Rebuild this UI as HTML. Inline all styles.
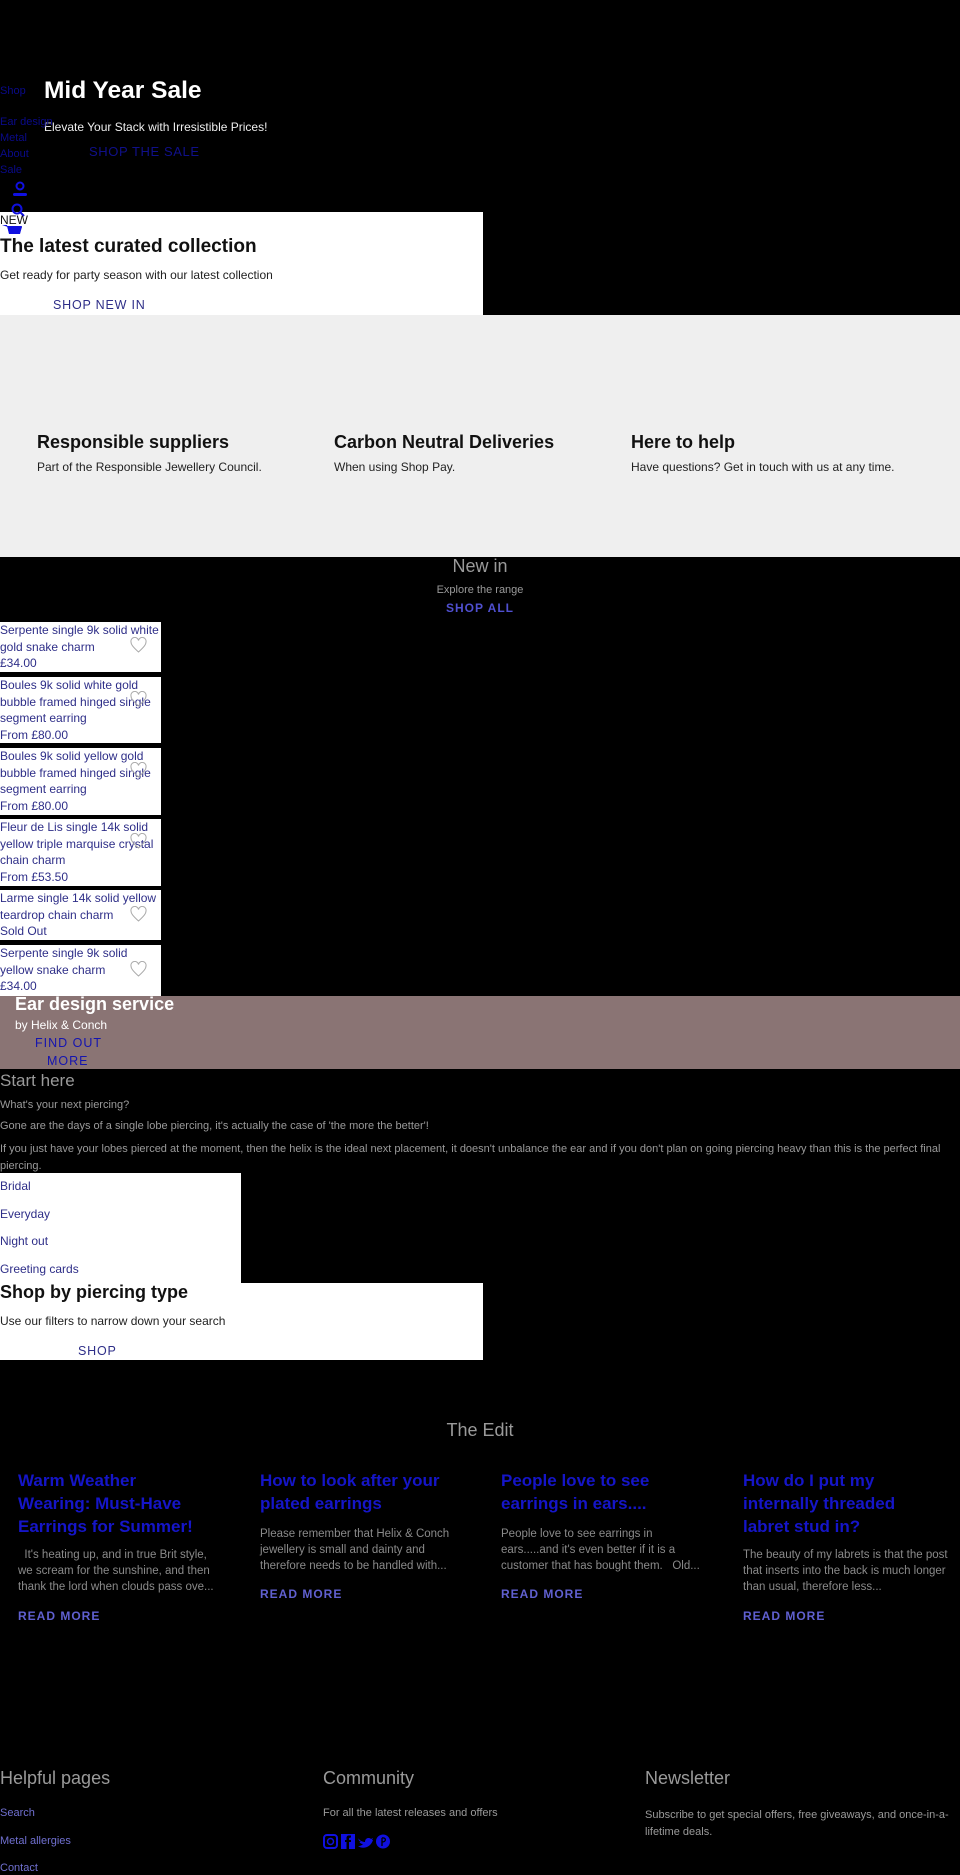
<!DOCTYPE html>
<html><head><meta charset="utf-8"><style>
*{margin:0;padding:0;box-sizing:border-box}
body{width:960px;height:1875px;background:#000;font-family:"Liberation Sans",sans-serif;position:relative;overflow:hidden}
.a{position:absolute;white-space:nowrap}
.nav{color:#0a0a8a;font-size:11px}
.card{position:absolute;left:0;width:161px;background:#fff;color:#2e2e88;font-size:12px;line-height:16.5px}
.card svg{position:absolute;right:14px}
.g{color:#9a9a9a}
.bt{color:#1515c8;font-size:17px;line-height:23px;font-weight:bold;white-space:normal;width:195px}
.bp{color:#8a8a8a;font-size:11.5px;line-height:16px;white-space:normal;width:205px}
.rm{color:#6060d0;font-size:12px;letter-spacing:1px;font-weight:bold}
</style></head><body>
<div class="a" style="left:44px;top:77px;color:#fff;font-size:24.5px;font-weight:bold">Mid Year Sale</div>
<div class="a" style="left:44px;top:120px;color:#eee;font-size:12px">Elevate Your Stack with Irresistible Prices!</div>
<div class="a" style="left:89px;top:144px;color:#10108a;font-size:13px;letter-spacing:.6px">SHOP THE SALE</div>
<div class="a nav" style="left:0;top:85px">Shop</div>
<div class="a nav" style="left:0;top:116px">Ear design</div>
<div class="a nav" style="left:0;top:132px">Metal</div>
<div class="a nav" style="left:0;top:148px">About</div>
<div class="a nav" style="left:0;top:164px">Sale</div>
<svg class="a" style="left:12px;top:181px" width="16" height="16"><circle cx="8" cy="5" r="3.5" fill="none" stroke="#1010e0" stroke-width="2"/><rect x="1" y="12" width="14" height="3" rx="1.5" fill="#1010e0"/></svg>
<div class="a" style="left:0;top:212px;width:483px;height:103px;background:#fff"></div>
<svg class="a" style="left:10px;top:202px" width="16" height="16"><circle cx="7" cy="7" r="4.5" fill="none" stroke="#1010e0" stroke-width="2"/><line x1="10" y1="10" x2="14" y2="14" stroke="#1010e0" stroke-width="2"/></svg>
<div class="a" style="left:0;top:213px;color:#111;font-size:12px">NEW</div>
<svg class="a" style="left:2px;top:224px" width="20" height="12"><path d="M0 1H5L7 9H18L20 3H6" fill="#1010e0"/><path d="M5 2H20L18 10H7Z" fill="#1010e0"/></svg>
<div class="a" style="left:0;top:236px;color:#111;font-size:19px;font-weight:bold">The latest curated collection</div>
<div class="a" style="left:0;top:268px;color:#222;font-size:12px">Get ready for party season with our latest collection</div>
<div class="a" style="left:53px;top:298px;color:#2e2e88;font-size:12.5px;letter-spacing:.8px">SHOP NEW IN</div>
<div class="a" style="left:0;top:315px;width:960px;height:242px;background:#efefef"></div>
<div class="a" style="left:37px;top:432px;color:#111;font-size:18px;font-weight:bold">Responsible suppliers</div>
<div class="a" style="left:37px;top:460px;color:#222;font-size:12px">Part of the Responsible Jewellery Council.</div>
<div class="a" style="left:334px;top:432px;color:#111;font-size:18px;font-weight:bold">Carbon Neutral Deliveries</div>
<div class="a" style="left:334px;top:460px;color:#222;font-size:12px">When using Shop Pay.</div>
<div class="a" style="left:631px;top:432px;color:#111;font-size:18px;font-weight:bold">Here to help</div>
<div class="a" style="left:631px;top:460px;color:#222;font-size:12px">Have questions? Get in touch with us at any time.</div>
<div class="a g" style="left:0;width:960px;text-align:center;top:556px;font-size:18px">New in</div>
<div class="a g" style="left:0;width:960px;text-align:center;top:584px;font-size:11px">Explore the range</div>
<div class="a" style="left:0;width:960px;text-align:center;top:601px;font-size:12px;color:#5050d0;font-weight:bold;letter-spacing:1px">SHOP ALL</div>
<div class="card" style="top:622px;height:50px">Serpente single 9k solid white gold snake charm<br>£34.00<svg style="top:15px" width="17" height="16"><path d="M8.5 15C3 10 1 7.5 1 5A3.8 3.8 0 0 1 8.5 3.5A3.8 3.8 0 0 1 16 5C16 7.5 14 10 8.5 15Z" fill="none" stroke="#aaa"/></svg></div>
<div class="card" style="top:677px;height:66px">Boules 9k solid white gold bubble framed hinged single segment earring<br>From £80.00<svg style="top:14px" width="17" height="16"><path d="M8.5 15C3 10 1 7.5 1 5A3.8 3.8 0 0 1 8.5 3.5A3.8 3.8 0 0 1 16 5C16 7.5 14 10 8.5 15Z" fill="none" stroke="#aaa"/></svg></div>
<div class="card" style="top:748px;height:67px">Boules 9k solid yellow gold bubble framed hinged single segment earring<br>From £80.00<svg style="top:14px" width="17" height="16"><path d="M8.5 15C3 10 1 7.5 1 5A3.8 3.8 0 0 1 8.5 3.5A3.8 3.8 0 0 1 16 5C16 7.5 14 10 8.5 15Z" fill="none" stroke="#aaa"/></svg></div>
<div class="card" style="top:819px;height:67px">Fleur de Lis single 14k solid yellow triple marquise crystal chain charm<br>From £53.50<svg style="top:14px" width="17" height="16"><path d="M8.5 15C3 10 1 7.5 1 5A3.8 3.8 0 0 1 8.5 3.5A3.8 3.8 0 0 1 16 5C16 7.5 14 10 8.5 15Z" fill="none" stroke="#aaa"/></svg></div>
<div class="card" style="top:890px;height:50px">Larme single 14k solid yellow teardrop chain charm<br>Sold Out<svg style="top:16px" width="17" height="16"><path d="M8.5 15C3 10 1 7.5 1 5A3.8 3.8 0 0 1 8.5 3.5A3.8 3.8 0 0 1 16 5C16 7.5 14 10 8.5 15Z" fill="none" stroke="#aaa"/></svg></div>
<div class="card" style="top:945px;height:51px">Serpente single 9k solid yellow snake charm<br>£34.00<svg style="top:16px" width="17" height="16"><path d="M8.5 15C3 10 1 7.5 1 5A3.8 3.8 0 0 1 8.5 3.5A3.8 3.8 0 0 1 16 5C16 7.5 14 10 8.5 15Z" fill="none" stroke="#aaa"/></svg></div>
<div class="a" style="left:0;top:996px;width:960px;height:73px;background:#8a7474"></div>
<div class="a" style="left:15px;top:994px;color:#fff;font-size:18px;font-weight:bold">Ear design service</div>
<div class="a" style="left:15px;top:1018px;color:#fff;font-size:12px">by Helix &amp; Conch</div>
<div class="a" style="left:35px;top:1036px;color:#1414b0;font-size:12.5px;letter-spacing:1px">FIND OUT</div>
<div class="a" style="left:47px;top:1054px;color:#1414b0;font-size:12.5px;letter-spacing:1px">MORE</div>
<div class="a g" style="left:0;top:1071px;font-size:17px">Start here</div>
<div class="a g" style="left:0;top:1099px;font-size:11px">What's your next piercing?</div>
<div class="a g" style="left:0;top:1120px;font-size:11px">Gone are the days of a single lobe piercing, it's actually the case of 'the more the better'!</div>
<div class="a g" style="left:0;top:1141px;font-size:11px;white-space:normal;width:960px;line-height:17px">If you just have your lobes pierced at the moment, then the helix is the ideal next placement, it doesn't unbalance the ear and if you don't plan on going piercing heavy than this is the perfect final piercing.</div>
<div class="a" style="left:0;top:1173px;width:241px;height:110px;background:#fff"></div>
<div class="a" style="left:0;top:1179px;color:#2e2e88;font-size:12px">Bridal</div>
<div class="a" style="left:0;top:1207px;color:#2e2e88;font-size:12px">Everyday</div>
<div class="a" style="left:0;top:1234px;color:#2e2e88;font-size:12px">Night out</div>
<div class="a" style="left:0;top:1262px;color:#2e2e88;font-size:12px">Greeting cards</div>
<div class="a" style="left:0;top:1283px;width:483px;height:77px;background:#fff"></div>
<div class="a" style="left:0;top:1282px;color:#111;font-size:18px;font-weight:bold">Shop by piercing type</div>
<div class="a" style="left:0;top:1314px;color:#222;font-size:12px">Use our filters to narrow down your search</div>
<div class="a" style="left:78px;top:1344px;color:#2e2e88;font-size:12.5px;letter-spacing:.8px">SHOP</div>
<div class="a g" style="left:0;width:960px;text-align:center;top:1420px;font-size:18px">The Edit</div>
<div class="a bt" style="left:18px;top:1469px">Warm Weather Wearing: Must-Have Earrings for Summer!</div>
<div class="a bp" style="left:18px;top:1547px">&nbsp; It's heating up, and in true Brit style, we scream for the sunshine, and then thank the lord when clouds pass ove...</div>
<div class="a rm" style="left:18px;top:1609px">READ MORE</div>
<div class="a bt" style="left:260px;top:1469px">How to look after your plated earrings</div>
<div class="a bp" style="left:260px;top:1526px">Please remember that Helix &amp; Conch jewellery is small and dainty and therefore needs to be handled with...</div>
<div class="a rm" style="left:260px;top:1587px">READ MORE</div>
<div class="a bt" style="left:501px;top:1469px">People love to see earrings in ears....</div>
<div class="a bp" style="left:501px;top:1526px">People love to see earrings in ears.....and it's even better if it is a customer that has bought them. &nbsp; Old...</div>
<div class="a rm" style="left:501px;top:1587px">READ MORE</div>
<div class="a bt" style="left:743px;top:1469px">How do I put my internally threaded labret stud in?</div>
<div class="a bp" style="left:743px;top:1547px">The beauty of my labrets is that the post that inserts into the back is much longer than usual, therefore less...</div>
<div class="a rm" style="left:743px;top:1609px">READ MORE</div>
<div class="a g" style="left:0;top:1768px;font-size:18px">Helpful pages</div>
<div class="a" style="left:0;top:1807px;color:#7070d0;font-size:11px">Search</div>
<div class="a" style="left:0;top:1835px;color:#7070d0;font-size:11px">Metal allergies</div>
<div class="a" style="left:0;top:1862px;color:#7070d0;font-size:11px">Contact</div>
<div class="a g" style="left:323px;top:1768px;font-size:18px">Community</div>
<div class="a g" style="left:323px;top:1807px;font-size:11px">For all the latest releases and offers</div>
<svg class="a" style="left:323px;top:1834px" width="70" height="16"><rect x="1" y="1" width="13" height="13" rx="3" fill="none" stroke="#1010e0" stroke-width="2"/><circle cx="7.5" cy="7.5" r="3" fill="none" stroke="#1010e0" stroke-width="1.5"/><rect x="18" y="0" width="14" height="15" fill="#1010e0"/><path d="M26 15V8H28V6H26V4.5C26 4 26.5 3.5 28 3.5V1.5H25.5C24 1.5 23.5 3 23.5 4V6H22V8H23.5V15Z" fill="#000"/><path d="M35 4C37 7 40 8 42 8C42 4 46 3 48 5L50 4L49 6L50 6C48 13 40 16 35 12C38 12 39 11 40 10C38 10 37 9 36.5 8H38C36 7 35.5 6 35.5 5Z" fill="#1010e0"/><circle cx="60" cy="7.5" r="7" fill="#1010e0"/><path d="M59 4V12M59 4C63 3 64 8 59 8" stroke="#000" fill="none" stroke-width="1.3"/></svg>
<div class="a g" style="left:645px;top:1768px;font-size:18px">Newsletter</div>
<div class="a g" style="left:645px;top:1807px;font-size:11px;white-space:normal;width:320px;line-height:17px">Subscribe to get special offers, free giveaways, and once-in-a-lifetime deals.</div>
</body></html>
